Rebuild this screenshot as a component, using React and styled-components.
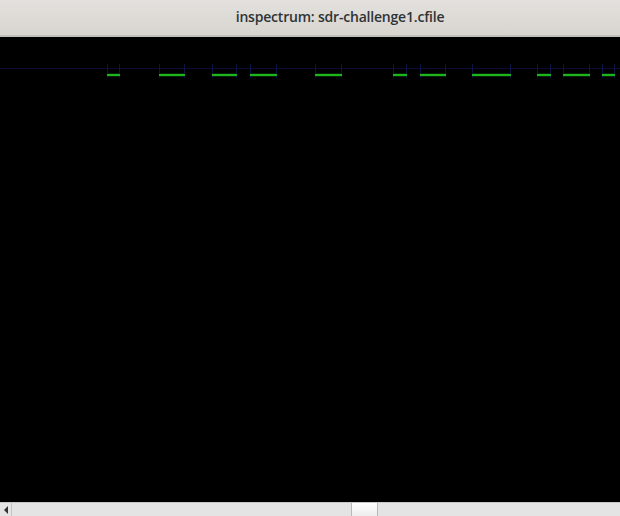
import React from "react";
import styled, { createGlobalStyle } from "styled-components";

const bursts = [
  [107, 120], [159, 185], [212, 237], [250, 277], [315, 342],
  [393, 407], [420, 446], [472, 511], [537, 551], [563, 590], [602, 615],
];

const GlobalStyle = createGlobalStyle`
  html, body { margin: 0; padding: 0; background: #000; }
  body { font-family: "Open Sans", "Noto Sans", sans-serif; overflow: hidden; }
`;

const Window = styled.div`
  width: 620px;
  height: 516px;
  display: flex;
  flex-direction: column;
  background: #000;
`;

const TitleBar = styled.div`
  height: 37px;
  flex: none;
  display: flex;
  align-items: center;
  justify-content: center;
  padding-left: 60px;
  padding-bottom: 2px;
  box-sizing: border-box;
  background: linear-gradient(#e3e1dd, #d8d5d0);
  border-bottom: 2px solid #c3c0bb;
  color: #2e3436;
  font-size: 14px;
  font-weight: 600;
  letter-spacing: -0.2px;
`;

const Plot = styled.div`
  flex: 1;
  background: #000;
  svg { display: block; }
`;

const ScrollBar = styled.div`
  height: 14px;
  flex: none;
  display: flex;
  background: #e4e4e4;
  border-top: 1px solid #c9c9c9;
  box-sizing: border-box;
`;

const ArrowButton = styled.div`
  width: 11px;
  display: flex;
  align-items: center;
  justify-content: center;
  border-right: 1px solid #c4c4c4;
  &::before {
    content: "";
    border-top: 4px solid transparent;
    border-bottom: 4px solid transparent;
    border-right: 4px solid #333;
  }
`;

const Track = styled.div`
  flex: 1;
  display: flex;
  padding-left: ${(p) => p.offset}px;
`;

const Thumb = styled.div`
  width: 25px;
  background: linear-gradient(#ffffff, #ededed);
  border-left: 1px solid #b8b8b8;
  border-right: 1px solid #b8b8b8;
`;

const Spectrum = () => (
  <svg width="620" height="465" viewBox="0 37 620 465">
    <line x1="0" y1="68.5" x2="620" y2="68.5" stroke="#110b33" strokeWidth="1" />
    {bursts.map(([a, b]) => (
      <g key={a}>
        <line x1={a + 0.5} y1="64" x2={a + 0.5} y2="78" stroke="#0b1640" strokeWidth="1" />
        <line x1={b - 0.5} y1="64" x2={b - 0.5} y2="78" stroke="#0b1640" strokeWidth="1" />
        <rect x={a} y="74" width={b - a} height="2" fill="#20b41c" />
        <rect x={a + 1} y="73" width={b - a - 2} height="1" fill="#0a4a12" opacity="0.5" />
        <rect x={a + 1} y="76" width={b - a - 2} height="1" fill="#0a4a12" opacity="0.5" />
      </g>
    ))}
  </svg>
);

export default function App() {
  return (
    <>
      <GlobalStyle />
      <Window>
        <TitleBar>inspectrum: sdr-challenge1.cfile</TitleBar>
        <Plot>
          <Spectrum />
        </Plot>
        <ScrollBar>
          <ArrowButton />
          <Track offset={339}>
            <Thumb />
          </Track>
        </ScrollBar>
      </Window>
    </>
  );
}
